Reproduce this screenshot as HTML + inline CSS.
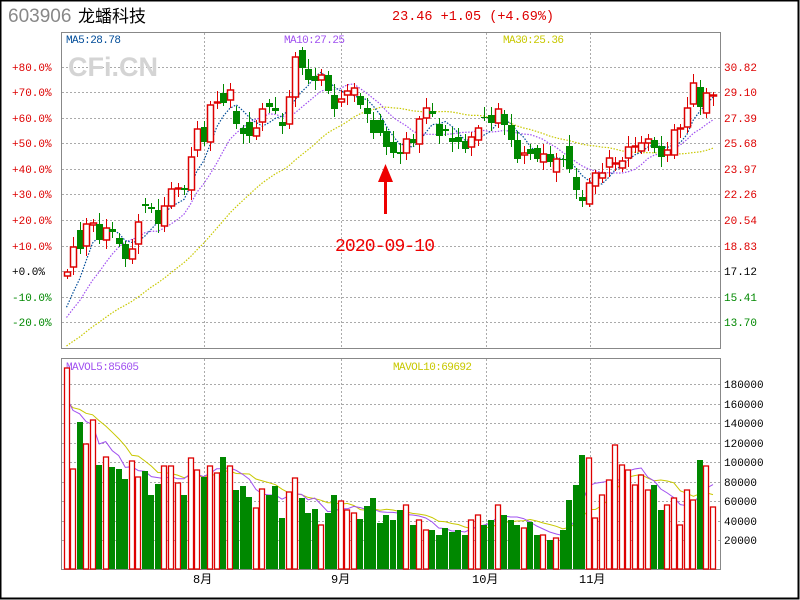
<!DOCTYPE html>
<html><head><meta charset="utf-8"><style>
html,body{margin:0;padding:0;background:#fff;width:800px;height:600px;overflow:hidden}
svg{display:block}
text{font-family:"Liberation Mono",monospace;font-size:11px}
</style></head><body>
<svg id="s" width="800" height="600" xmlns="http://www.w3.org/2000/svg">
<rect x="0.5" y="0.5" width="798" height="598" fill="#fff" stroke="#000" stroke-width="2"/>
<text x="8" y="22" style="font-family:'Liberation Sans',sans-serif;font-size:19px" fill="#888">603906</text>
<text x="78" y="22" style="font-family:'Liberation Sans','Noto Sans CJK SC',sans-serif;font-size:17px" fill="#000">龙蟠科技</text>
<text x="392" y="20" style="font-size:13.5px" fill="#d00">23.46 +1.05 (+4.69%)</text>
<g id="grid" stroke="#aaa" stroke-dasharray="2,2" stroke-width="1"></g>
<rect x="61.5" y="32.5" width="659" height="316" fill="none" stroke="#888"/>
<rect x="61.5" y="358.5" width="659" height="211" fill="none" stroke="#888"/>
<text x="68" y="76" style="font-family:'Liberation Sans',sans-serif;font-size:27px;font-weight:bold" fill="#d4d4d4">CFi.CN</text>
<text x="66" y="43" fill="#004c99" textLength="55">MA5:28.78</text>
<text x="284" y="43" fill="#a050f0" textLength="61">MA10:27.25</text>
<text x="503" y="43" fill="#c8c800" textLength="61">MA30:25.36</text>
<text x="66" y="370" fill="#a050f0" textLength="73">MAVOL5:85605</text>
<text x="393" y="370" fill="#c8c800" textLength="79">MAVOL10:69692</text>
<g id="labels"></g>
<g id="mas"></g>
<g id="candles"></g>
<g id="vols"></g>
<text x="335" y="251" style="font-size:18px" fill="#e00" textLength="100">2020-09-10</text>
<rect x="384" y="180" width="3" height="34" fill="#e00"/>
<polygon points="385.5,164 378,182 393,182" fill="#e00"/>
<text x="193" y="583" fill="#000" style="font-family:'Liberation Mono','Noto Sans CJK SC',monospace;font-size:12px">8月</text>
<text x="331" y="583" fill="#000" style="font-family:'Liberation Mono','Noto Sans CJK SC',monospace;font-size:12px">9月</text>
<text x="472" y="583" fill="#000" style="font-family:'Liberation Mono','Noto Sans CJK SC',monospace;font-size:12px">10月</text>
<text x="579" y="583" fill="#000" style="font-family:'Liberation Mono','Noto Sans CJK SC',monospace;font-size:12px">11月</text>
</svg>
<script>
var NS="http://www.w3.org/2000/svg";
function el(p,t,a,txt){var e=document.createElementNS(NS,t);for(var k in a)e.setAttribute(k,a[k]);if(txt!=null)e.textContent=txt;document.getElementById(p).appendChild(e);return e;}
[204,341,486,590].forEach(function(x){el("grid","line",{x1:x+.5,y1:33,x2:x+.5,y2:348});el("grid","line",{x1:x+.5,y1:359,x2:x+.5,y2:569});});
var py=[67,92,118,143,169,194,220,246,271,297,322];
py.forEach(function(y){el("grid","line",{x1:62,y1:y+.5,x2:720,y2:y+.5});});
for(var i=0;i<9;i++){var y=384+i*19.5;el("grid","line",{x1:62,y1:Math.round(y)+.5,x2:720,y2:Math.round(y)+.5});}
var lp=["+80.0%","+70.0%","+60.0%","+50.0%","+40.0%","+30.0%","+20.0%","+10.0%","+0.0%","-10.0%","-20.0%"];
var rp=["30.82","29.10","27.39","25.68","23.97","22.26","20.54","18.83","17.12","15.41","13.70"];
for(i=0;i<11;i++){var c=i<8?"#d00":(i==8?"#000":"#080");el("labels","text",{x:12,y:py[i]+4,fill:c},lp[i]);}
for(i=0;i<11;i++){var c=i<8?"#d00":(i==8?"#000":"#080");el("labels","text",{x:724,y:py[i]+4,fill:c},rp[i]);}
for(i=0;i<9;i++){var v=180000-i*20000;el("labels","text",{x:724,y:Math.round(384+i*19.5)+4,fill:"#000"},String(v));}
var C=[[276,272],[267,247],[230,249],[246,224],[225,223],[224,240],[240,228],[229,232],[238,244],[244,259],[259,249],[244,222],[204,206],[207,209],[210,224],[226,206],[206,189],[189,188],[188,190],[190,157],[150,129],[127,142],[142,105],[103,102],[93,103],[100,90],[111,124],[128,134],[122,136],[136,128],[122,109],[103,107],[108,111],[122,126],[124,97],[97,57],[50,68],[69,80],[76,81],[80,75],[75,91],[95,109],[102,99],[95,91],[95,88],[96,105],[108,114],[120,133],
[120,133],[131,147],[142,153],[152,154],[153,139],[139,143],[144,119],[118,108],[111,114],[124,136],[129,131],[138,142],[137,142],[141,149],[147,137],[140,128],[117,118],[115,123],[123,109],[114,125],[125,140],[140,159],[155,153],[149,154],[148,159],[162,154],[154,162],[172,159],[159,160],[146,169],[177,190],[197,201],[204,183],[186,173],[178,173],[167,158],[164,163],[168,161],[158,147],[147,146],[151,143],[143,139],[140,148],[146,157],[155,150],[155,130],[129,128],[127,108],[104,83],[87,107],[113,93],[96,95]];
var V=[368,469,422,444,420,465,457,467,469,479,461,477,471,495,484,466,466,483,495,458,470,477,466,473,457,466,490,486,497,508,489,495,486,518,492,478,498,513,509,525,513,495,501,510,513,519,506,498,523,515,
520,510,505,525,520,530,530,535,528,532,530,535,520,515,525,520,505,515,520,525,528,522,535,535,540,538,530,500,485,455,458,518,495,480,445,465,470,485,475,490,485,510,505,498,525,490,500,460,466,507];
var N=C.length,dx=(713-66.5)/(N-1);
function X(i){return 66.5+dx*i;}
var cl=[];for(i=0;i<29;i++)cl.push(385-i*2.6);C.forEach(function(c){cl.push(c[1]);});
function ma(arr,n,off){var pts=[];for(var i=0;i<N;i++){var s=0;for(var k=0;k<n;k++)s+=arr[off+i-k];pts.push(X(i).toFixed(1)+","+(s/n).toFixed(1));}return pts.join(" ");}
el("mas","polyline",{points:ma(cl,30,29),fill:"none",stroke:"#c8c800","stroke-dasharray":"1.5,1.5","stroke-width":1.2});
el("mas","polyline",{points:ma(cl,10,29),fill:"none",stroke:"#a050f0","stroke-dasharray":"1.5,1.5","stroke-width":1.2});
el("mas","polyline",{points:ma(cl,5,29),fill:"none",stroke:"#004c99","stroke-dasharray":"1.5,1.5","stroke-width":1.2});
for(i=0;i<N;i++){var o=C[i][0],c=C[i][1],x=Math.round(X(i)),up=c<=o;var col=up?"#d00":"#080";
 var t=Math.min(o,c),b=Math.max(o,c),h=Math.max(b-t,1);
 var hi=t-(3+(i*7)%9),lo=b+(3+(i*5)%8);
 el("candles","line",{x1:x+.5,y1:hi,x2:x+.5,y2:lo,stroke:col});
 if(up)el("candles","rect",{x:x-2.5,y:t,width:6,height:h,fill:"#fff",stroke:col,"stroke-width":1.5});
 else el("candles","rect",{x:x-3,y:t,width:7,height:h,fill:col});
 var vt=V[i];
 if(up)el("vols","rect",{x:x-2.5,y:vt,width:5,height:569-vt,fill:"#fff",stroke:col,"stroke-width":1.3});
 else el("vols","rect",{x:x-3,y:vt,width:6,height:569-vt,fill:col});}
var vv=[];for(i=0;i<9;i++)vv.push(405);V.forEach(function(v){vv.push(v);});
el("mas","polyline",{points:ma(vv,10,9),fill:"none",stroke:"#c8c800","stroke-width":1});
el("mas","polyline",{points:ma(vv,5,9),fill:"none",stroke:"#a050f0","stroke-width":1});
</script>
</body></html>
